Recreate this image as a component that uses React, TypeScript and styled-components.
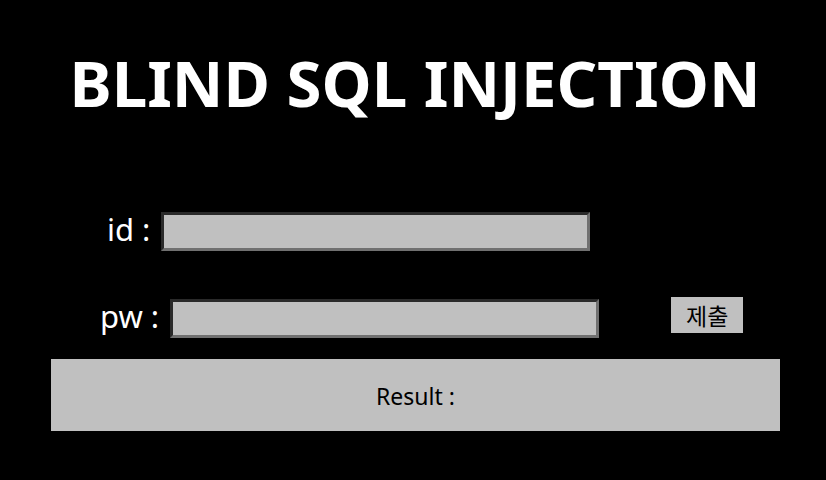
import React from "react";
import styled, { createGlobalStyle } from "styled-components";

const Global = createGlobalStyle`
  html, body {
    margin: 0;
    padding: 0;
    background: #000;
  }
  body {
    font-family: "Noto Sans", "Noto Sans CJK KR", sans-serif;
    color: #fff;
  }
`;

const Page = styled.div`
  width: 826px;
  height: 480px;
  background: #000;
  display: flex;
  flex-direction: column;
  overflow: hidden;
`;

const Title = styled.h1`
  margin: 43px 0 0 0;
  padding-left: 4px;
  text-align: center;
  font-family: "Noto Sans", "Noto Sans CJK KR", sans-serif;
  font-weight: 700;
  font-size: 63.5px;
  letter-spacing: 0;
  line-height: 80px;
  color: #fff;
`;

const Form = styled.form`
  display: flex;
  flex-direction: column;
  margin-top: 89px;
`;

const Row = styled.div<{ $indent: number; $top: number }>`
  display: flex;
  align-items: center;
  padding-left: ${(p) => p.$indent}px;
  margin-top: ${(p) => p.$top}px;
  height: 39px;
`;

const Label = styled.label`
  font-family: "Noto Sans", "Noto Sans CJK KR", sans-serif;
  font-size: 31px;
  color: #fff;
  margin-right: 11px;
  line-height: 39px;
  margin-top: -4px;
`;

const Field = styled.input`
  box-sizing: border-box;
  width: 429px;
  height: 39px;
  background: #c0c0c0;
  border-style: solid;
  border-width: 3px;
  border-color: #2a2a2a #707070 #707070 #2a2a2a;
  margin: 0;
  padding: 0 4px;
  outline: none;
  font-size: 18px;
`;

const Submit = styled.button`
  box-sizing: border-box;
  margin-left: 72px;
  width: 72px;
  height: 36px;
  align-self: flex-start;
  margin-top: -2px;
  background: #c0c0c0;
  border: none;
  padding: 0;
  font-family: "Noto Sans CJK KR", sans-serif;
  font-size: 23px;
  color: #000;
  cursor: pointer;
`;

const Result = styled.div`
  margin: 21px 0 0 51px;
  width: 729px;
  height: 72px;
  background: #c0c0c0;
  color: #000;
  display: flex;
  align-items: center;
  justify-content: center;
  font-family: "Noto Sans", "Noto Sans CJK KR", sans-serif;
  font-size: 23px;
  padding-top: 2px;
  box-sizing: border-box;
`;

export default function App() {
  return (
    <>
      <Global />
      <Page>
        <Title>BLIND SQL INJECTION</Title>
        <Form onSubmit={(e) => e.preventDefault()}>
          <Row $indent={107} $top={0}>
            <Label>id :</Label>
            <Field type="text" name="id" />
          </Row>
          <Row $indent={100} $top={48}>
            <Label>pw :</Label>
            <Field type="password" name="pw" />
            <Submit type="submit">제출</Submit>
          </Row>
        </Form>
        <Result>Result :</Result>
      </Page>
    </>
  );
}
